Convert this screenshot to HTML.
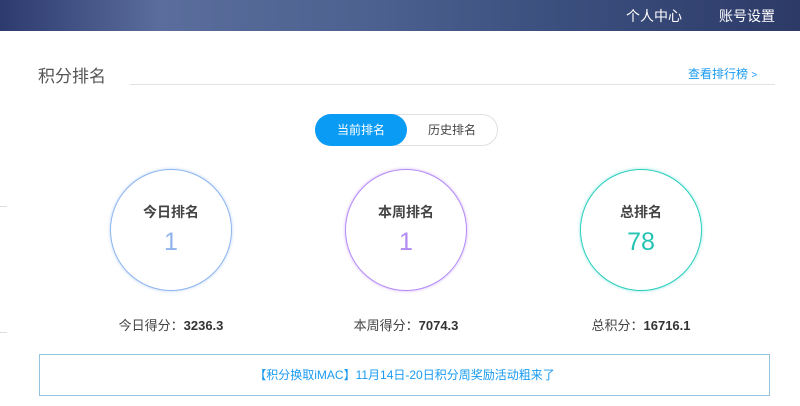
<!DOCTYPE html><html><head><meta charset="utf-8"><style>
*{margin:0;padding:0;box-sizing:border-box}
body{width:800px;height:406px;overflow:hidden;background:#fff;font-family:"Liberation Sans","Noto Sans CJK SC",sans-serif;position:relative;color:#333}
.top{position:absolute;left:0;top:0;width:800px;height:31px;background:linear-gradient(90deg,#2d3a6e 0%,#5a6d9c 20%,#4d6290 45%,#3b4f7e 70%,#2d3a68 100%)}
.top span{position:absolute;top:6px;color:#fff;font-size:14px}
.a{position:absolute}
.c{position:absolute;width:122px;height:122px;border-radius:50%;top:169px;text-align:center;background:#fff}
.c b{display:block;margin-top:32px;font-size:14px;color:#444;font-weight:bold}
.c i{display:block;font-style:normal;font-size:25px;margin-top:6px}
.s{position:absolute;top:315px;font-size:13px;color:#444;width:200px;text-align:center}
.s strong{color:#333}
</style></head><body>
<div class="top"><span style="left:626px">个人中心</span><span style="left:719px">账号设置</span></div>
<div class="a" style="left:38px;top:62px;font-size:17px;color:#555">积分排名</div>
<div class="a" style="left:130px;top:84px;width:645px;height:1px;background:#e2e2e2"></div>
<div class="a" style="left:688px;top:65px;font-size:12px;color:#1a9bf0">查看排行榜 <span style="font-size:10px">&gt;</span></div>
<div class="a" style="left:315px;top:114px;width:183px;height:32px;border:1px solid #e0e0e0;border-radius:16px"></div>
<div class="a" style="left:315px;top:114px;width:92px;height:32px;background:#0a9bf5;border-radius:16px;color:#fff;font-size:12px;text-align:center;line-height:32px">当前排名</div>
<div class="a" style="left:407px;top:114px;width:90px;height:32px;color:#444;font-size:12px;text-align:center;line-height:32px">历史排名</div>
<div class="a" style="left:0;top:206px;width:7px;height:1px;background:#ddd"></div>
<div class="a" style="left:0;top:332px;width:7px;height:1px;background:#ddd"></div>
<div class="c" style="left:110px;border:1px solid #8fb6ef;box-shadow:0 0 3px #b9d2f6"><b>今日排名</b><i style="color:#8fb3ea">1</i></div>
<div class="c" style="left:345px;border:1px solid #b68cf5;box-shadow:0 0 3px #d3b7f9"><b>本周排名</b><i style="color:#b28af2">1</i></div>
<div class="c" style="left:580px;border:1px solid #2ccfbf;box-shadow:0 0 3px #8fe6dc"><b>总排名</b><i style="color:#23c4b4">78</i></div>
<div class="s" style="left:71px">今日得分：<strong>3236.3</strong></div>
<div class="s" style="left:306px">本周得分：<strong>7074.3</strong></div>
<div class="s" style="left:541px">总积分：<strong>16716.1</strong></div>
<div class="a" style="left:39px;top:354px;width:731px;height:42px;border:1px solid #94c4dd;text-align:center;line-height:40px;font-size:12px;color:#1a9bf0">【积分换取iMAC】11月14日-20日积分周奖励活动粗来了</div>
</body></html>
